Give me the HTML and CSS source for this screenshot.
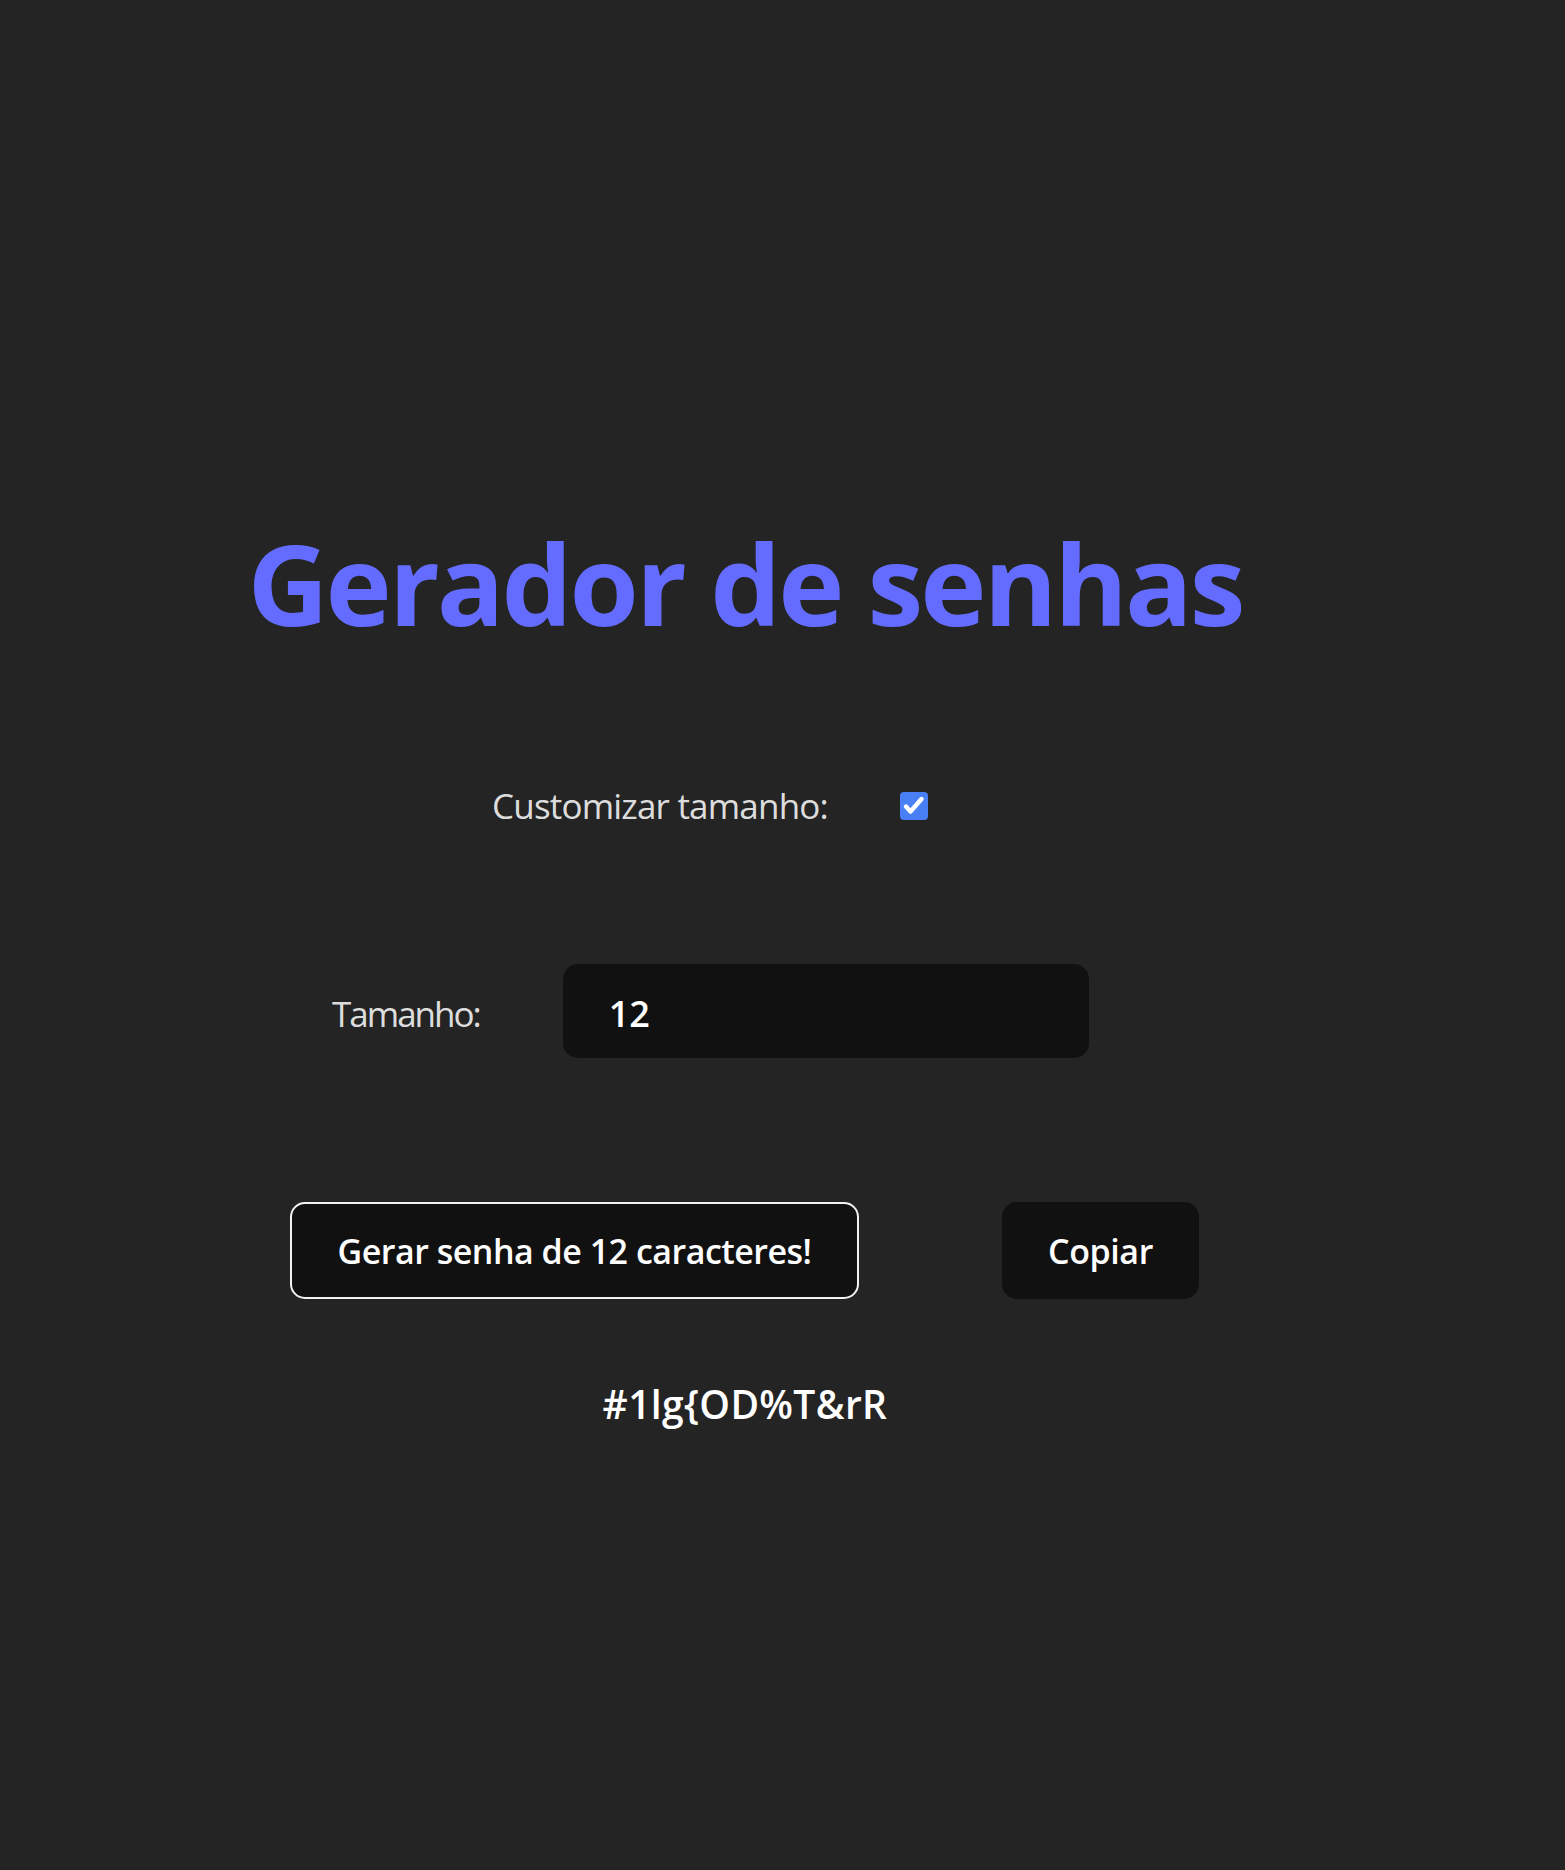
FILE: index.html
```html
<!DOCTYPE html>
<html lang="pt-BR">
<head>
<meta charset="utf-8">
<title>Gerador de senhas</title>
<link rel="stylesheet" href="styles.css">
</head>
<body>
<main class="app">
  <h1 class="title">Gerador de senhas</h1>
  <div class="row row-check">
    <label for="custom" class="label label-custom">Customizar tamanho:</label>
    <span class="check-wrap">
      <input type="checkbox" id="custom" class="check" checked>
      <svg class="check-mark" viewBox="0 0 28 28" aria-hidden="true"><path d="M6 14.5 L10.5 19.5 L21.5 7" fill="none" stroke="#fff" stroke-width="4.4" stroke-linecap="round" stroke-linejoin="round"/></svg>
    </span>
  </div>
  <div class="row row-size">
    <label for="size" class="label label-size">Tamanho:</label>
    <input id="size" class="size-input" type="text" inputmode="numeric" value="12">
  </div>
  <div class="row row-buttons">
    <button class="btn btn-generate">Gerar senha de 12 caracteres!</button>
    <button class="btn btn-copy">Copiar</button>
  </div>
  <p class="password">#1lg{OD%T&amp;rR</p>
</main>
</body>
</html>
```
FILE: styles.css
```css
html, body {
  margin: 0;
  padding: 0;
}
body {
  background: #242424;
  color: rgba(255, 255, 255, 0.87);
  font-family: "Open Sans", "Noto Sans", sans-serif;
  font-size: 35px;
  line-height: 1.5;
  min-height: 1870px;
}
.app {
  width: 1000px;
  margin-left: 245px;
  padding-top: 521px;
  display: flex;
  flex-direction: column;
}
.title {
  margin: 0;
  font-size: 112px;
  line-height: 1.1;
  font-weight: 700;
  letter-spacing: -2.9px;
  color: #646cff;
  text-align: center;
  white-space: nowrap;
}
.row {
  display: flex;
  align-items: center;
}
.row-check {
  margin-top: 135.5px;
  padding-left: 247px;
  gap: 72px;
}
.row-size {
  margin-top: 132px;
  padding-left: 87px;
  gap: 83px;
  align-items: baseline;
}
.row-buttons {
  margin-top: 144px;
  padding-left: 45px;
  gap: 143px;
}
.label {
  white-space: nowrap;
}
.label-custom {
  letter-spacing: -0.8px;
}
.label-size {
  letter-spacing: -2px;
}
.check-wrap {
  position: relative;
  width: 28px;
  height: 28px;
  display: block;
}
.check {
  appearance: none;
  -webkit-appearance: none;
  margin: 0;
  width: 28px;
  height: 28px;
  border-radius: 4px;
  background: #4a80f5;
  display: block;
}
.check-mark {
  position: absolute;
  left: 0;
  top: 0;
  width: 28px;
  height: 28px;
  pointer-events: none;
}
.size-input {
  box-sizing: border-box;
  width: 526px;
  height: 94px;
  border: none;
  border-radius: 15px;
  background: #111111;
  color: #ffffff;
  font-family: inherit;
  font-size: 36px;
  font-weight: 600;
  padding: 4px 0 0 46px;
  outline: none;
}
.btn {
  box-sizing: border-box;
  height: 97px;
  border-radius: 15px;
  background: #111111;
  color: #ffffff;
  font-family: inherit;
  font-size: 34px;
  font-weight: 600;
  line-height: 1.5;
  padding: 2px 0 0;
  text-align: center;
  white-space: nowrap;
}
.btn-generate {
  width: 569px;
  border: 2px solid #f2f2f2;
  letter-spacing: -0.5px;
}
.btn-copy {
  width: 197px;
  border: 2px solid transparent;
  letter-spacing: -0.4px;
}
.password {
  margin: 76px 0 0;
  font-size: 39px;
  font-weight: 600;
  letter-spacing: 0.35px;
  color: #ffffff;
  text-align: center;
}
```
